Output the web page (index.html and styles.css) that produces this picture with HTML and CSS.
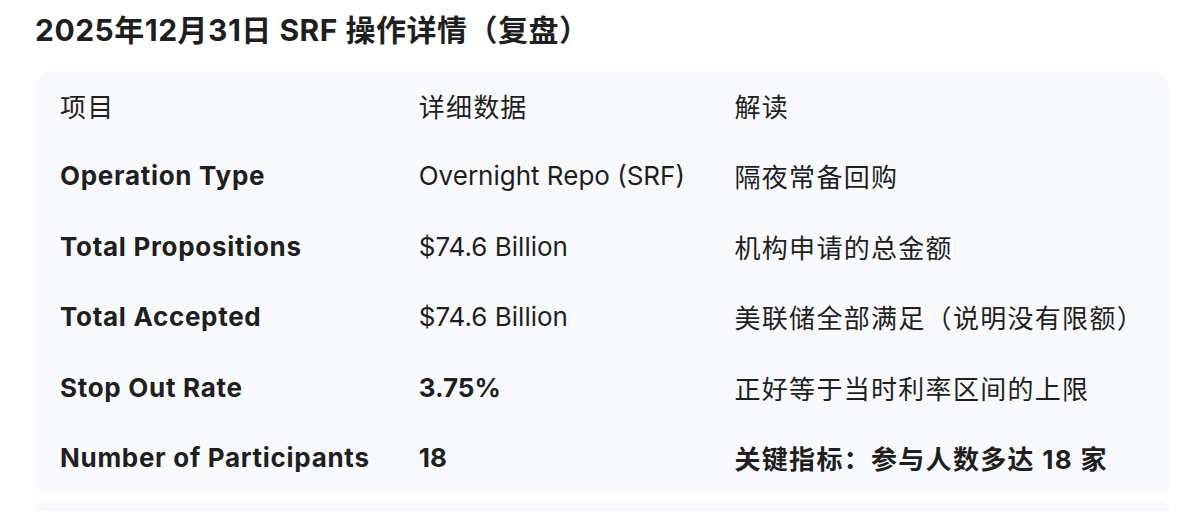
FILE: index.html
```html
<!DOCTYPE html>
<html lang="zh-CN">
<head>
<meta charset="utf-8">
<link rel="stylesheet" href="styles.css">
</head>
<body>
<div class="page">
  <h1 class="title">2025年12月31日 SRF 操作详情（复盘）</h1>
  <div class="card">
    <table class="grid">
      <thead>
        <tr><th class="c1">项目</th><th class="c2">详细数据</th><th class="c3">解读</th></tr>
      </thead>
      <tbody>
        <tr><td class="c1 b">Operation Type</td><td class="c2">Overnight Repo (SRF)</td><td class="c3">隔夜常备回购</td></tr>
        <tr><td class="c1 b">Total Propositions</td><td class="c2">$74.6 Billion</td><td class="c3">机构申请的总金额</td></tr>
        <tr><td class="c1 b">Total Accepted</td><td class="c2">$74.6 Billion</td><td class="c3">美联储全部满足（说明没有限额）</td></tr>
        <tr><td class="c1 b">Stop Out Rate</td><td class="c2 b">3.75%</td><td class="c3">正好等于当时利率区间的上限</td></tr>
        <tr><td class="c1 b">Number of Participants</td><td class="c2 b">18</td><td class="c3 b">关键指标：参与人数多达 18 家</td></tr>
      </tbody>
    </table>
  </div>
  <div class="card next"></div>
</div>
</body>
</html>
```
FILE: styles.css
```css
html, body {
  margin: 0;
  padding: 0;
  background: #ffffff;
}
body {
  font-family: Inter, "Noto Sans CJK SC", sans-serif;
  color: #1f1f1f;
  width: 1200px;
  height: 512px;
  overflow: hidden;
}
.page {
  padding: 10px 31px 0 35px;
}
.title {
  margin: 0 0 20px 0;
  font-size: 30px;
  line-height: 40px;
  font-weight: 700;
  color: #1f1f1f;
  letter-spacing: 0.5px;
}
.card {
  background: #f8f9fc;
  border-radius: 20px 20px 8px 8px;
  padding: 0 25px;
}
.card.next {
  margin-top: 8px;
  height: 10px;
  border-radius: 8px 8px 0 0;
}
.grid {
  border-collapse: collapse;
  width: 100%;
  font-size: 26px;
}
.grid th, .grid td {
  height: 70.5px;
  padding: 0;
  text-align: left;
  vertical-align: middle;
  font-weight: 400;
  white-space: nowrap;
}
.grid th {
  letter-spacing: 1.2px;
}
.grid .c3 {
  letter-spacing: 1.3px;
}
.grid .b {
  font-weight: 700;
}
.grid .c1.b {
  letter-spacing: 0.7px;
}
.c1 { width: 359px; }
.c2 { width: 316px; }
```
